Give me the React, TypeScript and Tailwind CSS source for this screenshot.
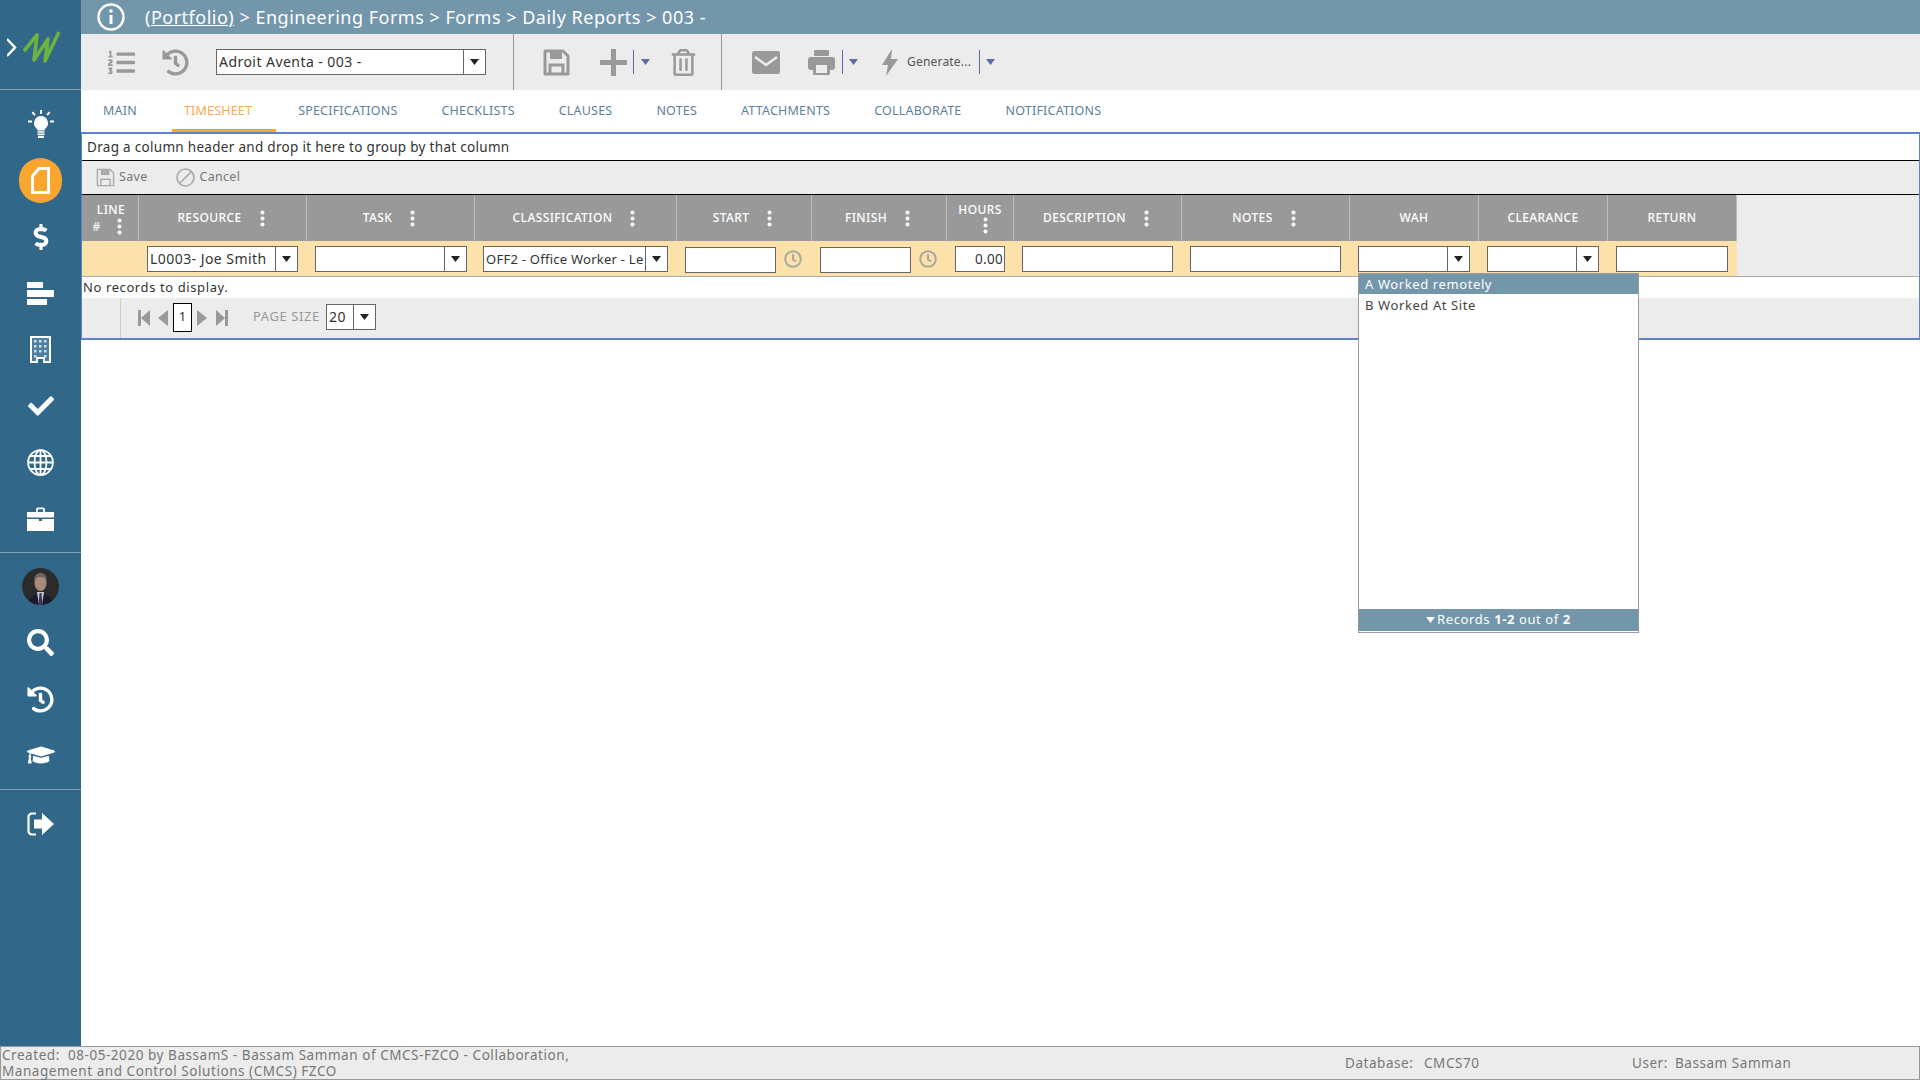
import React from 'react';
import { FaDollarSign, FaCheck, FaSearch, FaHistory, FaGraduationCap, FaListOl, FaRegTrashAlt } from 'react-icons/fa';

const tabs = ['SPECIFICATIONS', 'CHECKLISTS', 'CLAUSES', 'NOTES', 'ATTACHMENTS', 'COLLABORATE', 'NOTIFICATIONS'];

const Caret = ({ color = '#222' }: { color?: string }) => (
  <svg width="9" height="6" viewBox="0 0 9 6"><path d="M0 0h9L4.5 6z" fill={color} /></svg>
);

const Kebab = () => (
  <svg width="5" height="17" viewBox="0 0 5 17" fill="#fff"><circle cx="2.5" cy="2.5" r="2" /><circle cx="2.5" cy="8.5" r="2" /><circle cx="2.5" cy="14.5" r="2" /></svg>
);

const Clock = () => (
  <svg width="18" height="18" viewBox="0 0 18 18" fill="none" stroke="#a9a9a0" strokeWidth="2">
    <circle cx="9" cy="9" r="7.8" />
    <path d="M9 4v5.5l3 2" />
  </svg>
);

const Floppy = ({ size, color, weight }: { size: number; color: string; weight: number }) => (
  <svg width={size} height={size} viewBox="0 0 27 27" fill="none" stroke={color} strokeWidth={weight}>
    <path d="M2 2h18l5 5v18H2z" strokeLinejoin="round" />
    <path d="M7 2h12v8H7z" fill={color} stroke="none" />
    <path d="M7 25v-9h13v9" />
  </svg>
);

const Combo = ({ text = '', w, arrow = 22, font = 'text-[14px] tracking-[0.45px]' }: { text?: string; w: string; arrow?: number; font?: string }) => (
  <div className={`${w} ${font} h-[26px] flex bg-white border border-[#666] text-[#333] overflow-hidden`}>
    <div className="flex-1 min-w-0 pl-[2px] leading-[24px] whitespace-nowrap overflow-hidden">{text}</div>
    <div className="flex items-center justify-center border-l border-[#666] bg-white shrink-0" style={{ width: arrow }}><Caret /></div>
  </div>
);

const Input = ({ w, text = '' }: { w: string; text?: string }) => (
  <div className={`${w} h-[26px] bg-white border border-[#666] text-[13.5px] tracking-[0.3px] text-[#333] text-right pr-[1px] leading-[24px]`}>{text}</div>
);

const Head = ({ label, kebab = true }: { label: string; kebab?: boolean }) => (
  <div className={`flex items-center justify-center gap-[18px] border-r border-[#bdbdbd] text-[12px] tracking-[0.4px] font-medium text-white ${kebab ? 'pr-[3px]' : ''}`}>
    <span>{label}</span>
    {kebab && <Kebab />}
  </div>
);

const Cell = ({ children }: { children?: React.ReactNode }) => (
  <div className="flex items-center gap-[8px] px-[8px]">{children}</div>
);

const Sep = () => <div className="w-px h-[24px] bg-[#5a6ea5]" />;

export default function App() {
  return (
    <div className="h-screen w-screen overflow-hidden flex flex-col bg-white font-['Noto_Sans',sans-serif]">
      <div className="flex-1 min-h-0 flex">
        {/* left nav */}
        <aside className="w-[81px] shrink-0 bg-[#31688a] flex flex-col text-white">
          <div className="h-[90px] shrink-0 border-b border-[#7f9fb5] pl-[7px] pt-[31px]">
            <svg width="54" height="34" viewBox="0 0 54 34" fill="none">
              <path d="M0 8l8 8.5-8 8.5" stroke="#fff" strokeWidth="2.4" />
              <path d="M17 20 L30 4 L27 29 L41 8 L38 30 L52 1" stroke="#6db33f" strokeWidth="3.6" strokeLinejoin="round" />
            </svg>
          </div>
          <nav className="h-[463px] shrink-0 border-b border-[#7f9fb5] pt-[6px] flex flex-col items-center">
            <div className="h-[56px] flex items-center justify-center">
              <svg width="26" height="28" viewBox="0 0 26 28" fill="#fff">
                <path d="M13 6a7 7 0 0 0-4.4 12.4c.6.6.9 1.2.9 2h7c0-.8.3-1.400.9-2A7 7 0 0 0 13 6z" />
                <path d="M9.500 21.300h7v1.500h-7zM9.500 23.500h7V25h-7zM10 25.700h6V28h-6z" />
                <path d="M12 0h2v4h-2zM3.600 2.800l1.500-1.300 2.600 3-1.500 1.300zM22.400 2.800l-1.500-1.300-2.600 3 1.500 1.300zM0 10.500h4v2H0zM22 10.500h4v2h-4z" />
              </svg>
            </div>
            <div className="h-[57px] flex items-center justify-center">
              <div className="w-[43px] h-[45px] rounded-full bg-[#fba72f] flex items-center justify-center">
                <svg width="19" height="27" viewBox="0 0 19 27" fill="none" stroke="#fff" strokeWidth="3"><path d="M8 1.500h9.500v24H1.500V9z" /></svg>
              </div>
            </div>
            <div className="h-[56px] flex items-center justify-center"><FaDollarSign size={26} /></div>
            <div className="h-[56px] flex flex-col justify-center gap-[2px] w-[27px]">
              <div className="w-[16px] h-[6px] bg-white" />
              <div className="w-[27px] h-[7px] bg-white" />
              <div className="w-[20px] h-[6px] bg-white" />
            </div>
            <div className="h-[56px] flex items-center justify-center">
              <svg width="21" height="27" viewBox="0 0 21 27">
                <path d="M0 0h21v27H13v-4H8v4H0z" fill="#fff" />
                <path d="M2 2h17v23h-4v-4H6v4H2z" fill="#4d7f9e" />
                <path d="M4 4h2.500v2.500H4zM9 4h2.500v2.500H9zM14 4h2.500v2.500H14zM4 9h2.500v2.500H4zM9 9h2.500v2.500H9zM14 9h2.500v2.500H14zM4 14h2.500v2.500H4zM9 14h2.500v2.500H9zM14 14h2.500v2.500H14zM4 19h2.500v2.500H4zM14 19h2.500v2.500H14z" fill="#cfe0ea" />
              </svg>
            </div>
            <div className="h-[57px] flex items-center justify-center"><FaCheck size={26} /></div>
            <div className="h-[57px] flex items-center justify-center">
              <svg width="27" height="27" viewBox="0 0 27 27" fill="none" stroke="#fff" strokeWidth="1.800">
                <circle cx="13.500" cy="13.500" r="12.400" />
                <ellipse cx="13.500" cy="13.500" rx="6" ry="12.400" />
                <path d="M13.500 1v25M1 13.500h25M3 7h21M3 20h21" />
              </svg>
            </div>
            <div className="h-[56px] flex items-center justify-center">
              <svg width="27" height="24" viewBox="0 0 27 24" fill="#fff">
                <path d="M9 5V2.500A2 2 0 0 1 11 .5h5a2 2 0 0 1 2 2V5h-1.800V2.300h-5.400V5z" />
                <path d="M0 5h27v5.500H0zM0 12h12v2h3v-2h12v12H0z" />
              </svg>
            </div>
          </nav>
          <nav className="h-[237px] shrink-0 border-b border-[#7f9fb5] pt-[5px] flex flex-col items-center">
            <div className="h-[56px] flex items-center justify-center">
              <svg width="37" height="37" viewBox="0 0 37 37">
                <defs><clipPath id="avatarClip"><circle cx="18.500" cy="18.500" r="18.500" /></clipPath></defs>
                <g clipPath="url(#avatarClip)">
                  <rect width="37" height="37" fill="#2c2a2b" />
                  <path d="M5 37c1-8 6-10 13.500-11C26 27 31 29 32 37z" fill="#171b2c" />
                  <ellipse cx="18.500" cy="15" rx="6" ry="8" fill="#a98a78" />
                  <path d="M12 13c0-6 3-8 6.500-8S25 7 25 13c-1-3-3-4-6.500-4S13 10 12 13z" fill="#6a6560" />
                  <path d="M15 24h7l-2 13h-3z" fill="#c9c9d6" />
                  <path d="M17.500 25h2l1 12h-4z" fill="#3c3560" />
                </g>
              </svg>
            </div>
            <div className="h-[57px] flex items-center justify-center"><FaSearch size={27} /></div>
            <div className="h-[56px] flex items-center justify-center"><FaHistory size={27} /></div>
            <div className="h-[56px] flex items-center justify-center"><FaGraduationCap size={28} /></div>
          </nav>
          <div className="h-[68px] flex items-center justify-center">
            <svg width="27" height="24" viewBox="0 0 27 24" fill="none">
              <path d="M9 1.500H5A3.500 3.500 0 0 0 1.500 5v14A3.500 3.500 0 0 0 5 22.500h4" stroke="#fff" strokeWidth="2.200" />
              <path d="M7 7.500h8V1l12 11-12 11v-6.500H7z" fill="#fff" />
            </svg>
          </div>
        </aside>

        <main className="flex-1 min-w-0 flex flex-col">
          {/* breadcrumb */}
          <div className="h-[34px] shrink-0 bg-[#7396ab] flex items-center pl-[16px] text-white text-[18px] tracking-[0.5px]">
            <svg width="28" height="28" viewBox="0 0 28 28" fill="none" stroke="#fff">
              <circle cx="14" cy="14" r="12.500" strokeWidth="2.400" />
              <path d="M14 12v9" strokeWidth="3" />
              <circle cx="14" cy="8" r="1.800" fill="#fff" stroke="none" />
            </svg>
            <div className="ml-[20px] whitespace-nowrap"><span className="underline">(Portfolio)</span> &gt; Engineering Forms &gt; Forms &gt; Daily Reports &gt; 003 -</div>
          </div>

          {/* toolbar */}
          <div className="h-[56px] shrink-0 bg-[#ececec] flex items-center text-[#999]">
            <div className="w-[433px] h-full shrink-0 border-r border-[#999] flex items-center pl-[27px]">
              <FaListOl size={27} />
              <FaHistory size={27} className="ml-[27px]" />
              <div className="ml-[27px]"><Combo w="w-[270px]" text="Adroit Aventa - 003 -" /></div>
            </div>
            <div className="w-[208px] h-full shrink-0 border-r border-[#999] flex items-center pl-[29px]">
              <Floppy size={27} color="#999" weight={3} />
              <svg width="27" height="27" viewBox="0 0 27 27" fill="#999" className="ml-[30px]"><path d="M11 0h5v11h11v5H16v11h-5V16H0v-5h11z" /></svg>
              <div className="ml-[6px]"><Sep /></div>
              <div className="ml-[7px]"><Caret color="#5a6ea5" /></div>
              <FaRegTrashAlt size={27} className="ml-[20px]" />
            </div>
            <svg width="28" height="23" viewBox="0 0 28 23" className="ml-[30px]"><rect width="28" height="23" rx="2.500" fill="#999" /><path d="M3 6l11 8 11-8" fill="none" stroke="#ececec" strokeWidth="2.500" /></svg>
            <svg width="27" height="25" viewBox="0 0 27 25" className="ml-[28px]">
              <rect x="6" y="0" width="15" height="6" rx="1" fill="#999" />
              <rect x="0" y="7" width="27" height="13" rx="3" fill="#999" />
              <rect x="5" y="13" width="17" height="12" rx="1" fill="#999" />
              <rect x="8" y="15" width="11" height="8" fill="#ececec" />
            </svg>
            <div className="ml-[7px]"><Sep /></div>
            <div className="ml-[6px]"><Caret color="#5a6ea5" /></div>
            <svg width="16" height="27" viewBox="0 0 16 27" fill="#999" className="ml-[24px]"><path d="M10 0L0 16h6L4 27l12-17H9z" /></svg>
            <span className="ml-[9px] text-[12px] tracking-[0.2px] text-[#555] whitespace-nowrap">Generate...</span>
            <div className="ml-[8px]"><Sep /></div>
            <div className="ml-[6px]"><Caret color="#5a6ea5" /></div>
          </div>

          {/* tabs */}
          <div className="h-[42px] shrink-0 flex text-[12.5px] tracking-[0.2px] text-[#5c7f9c]">
            <div className="h-full pl-[22px] pr-[19px] flex items-center">MAIN</div>
            <div className="ml-[16px] h-full pl-[12px] pr-[24px] pt-[3px] flex items-center text-[#fba94f] border-b-[3px] border-[#fba72f]">TIMESHEET</div>
            {tabs.map((tab, i) => (
              <div key={i} className="h-full flex items-center px-[22px]">{tab}</div>
            ))}
          </div>

          {/* grid */}
          <div className="relative shrink-0 border-t-2 border-b-2 border-x border-[#5b85c8]">
            <div className="h-[27px] bg-white border-b border-black pl-[5px] text-[13.5px] tracking-[0.3px] leading-[26px] text-[#333]">Drag a column header and drop it here to group by that column</div>
            <div className="h-[34px] bg-[#ececec] border-b border-black flex items-center pl-[14px] text-[12.5px] tracking-[0.3px] text-[#777]">
              <Floppy size={19} color="#aaa" weight={2} />
              <span className="ml-[4px]">Save</span>
              <svg width="19" height="19" viewBox="0 0 19 19" fill="none" stroke="#aaa" strokeWidth="1.700" className="ml-[29px]"><circle cx="9.500" cy="9.500" r="8.500" /><path d="M3.500 15.500l12-12" /></svg>
              <span className="ml-[4px]">Cancel</span>
            </div>
            <div className="bg-[#ececec]">
              <div className="grid w-[1655px] h-[46px] bg-[#999] grid-cols-[57px_168px_168px_202px_135px_135px_67px_168px_168px_129px_129px_129px]">
                <div className="flex flex-col items-center justify-center border-r border-[#bdbdbd] text-[12px] tracking-[0.4px] font-medium text-white leading-[17px]">
                  <span className="ml-[2px]">LINE</span>
                  <div className="flex items-center gap-[16px] mr-[6px]"><span>#</span><Kebab /></div>
                </div>
                <Head label="RESOURCE" />
                <Head label="TASK" />
                <Head label="CLASSIFICATION" />
                <Head label="START" />
                <Head label="FINISH" />
                <div className="flex flex-col items-center justify-center border-r border-[#bdbdbd] text-[12px] tracking-[0.4px] font-medium text-white leading-[15px]">
                  <span>HOURS</span>
                  <div className="ml-[10px]"><Kebab /></div>
                </div>
                <Head label="DESCRIPTION" />
                <Head label="NOTES" />
                <Head label="WAH" kebab={false} />
                <Head label="CLEARANCE" kebab={false} />
                <Head label="RETURN" kebab={false} />
              </div>
              <div className="grid w-[1655px] h-[35px] bg-[#fde1ab] grid-cols-[57px_168px_168px_202px_135px_135px_67px_168px_168px_129px_129px_129px]">
                <Cell />
                <Cell><Combo w="w-[151px]" text="L0003- Joe Smith" /></Cell>
                <Cell><Combo w="w-[152px]" /></Cell>
                <Cell><Combo w="w-[185px]" text="OFF2 - Office Worker - Le" font="text-[13px] tracking-[0.25px]" /></Cell>
                <Cell><Input w="w-[91px] mt-[2px]" /><Clock /></Cell>
                <Cell><Input w="w-[91px] mt-[2px]" /><Clock /></Cell>
                <Cell><Input w="w-[50px]" text="0.00" /></Cell>
                <Cell><Input w="w-[151px]" /></Cell>
                <Cell><Input w="w-[151px]" /></Cell>
                <Cell><Combo w="w-[112px]" /></Cell>
                <Cell><Combo w="w-[112px]" /></Cell>
                <Cell><Input w="w-[112px]" /></Cell>
              </div>
            </div>
            <div className="h-[21px] bg-white border-y border-[#aaa] box-content -mb-px pl-[1px] text-[13px] tracking-[0.6px] leading-[20px] text-[#333]">No records to display.</div>
            <div className="h-[40px] bg-[#ececec] flex items-center">
              <div className="w-[39px] h-full border-r border-[#ccc]" />
              <svg width="12" height="16" viewBox="0 0 12 16" fill="#999" className="ml-[17px] mb-[1px]"><path d="M0 0h3v16H0zM12 0v16L3 8z" /></svg>
              <svg width="10" height="16" viewBox="0 0 10 16" fill="#999" className="ml-[8px] mb-[1px]"><path d="M10 0v16L0 8z" /></svg>
              <div className="ml-[5px] mb-[2px] w-[19px] h-[29px] bg-white border border-black flex items-center justify-center text-[13px] text-[#333]">1</div>
              <svg width="10" height="16" viewBox="0 0 10 16" fill="#999" className="ml-[5px] mb-[1px]"><path d="M0 0v16l10-8z" /></svg>
              <svg width="12" height="16" viewBox="0 0 12 16" fill="#999" className="ml-[9px] mb-[1px]"><path d="M9 0h3v16H9zM0 0v16l9-8z" /></svg>
              <span className="ml-[25px] mb-[3px] text-[13px] tracking-[0.6px] text-[#999] whitespace-nowrap">PAGE SIZE</span>
              <div className="ml-[6px] mb-[3px]"><Combo w="w-[50px]" text="20" arrow={22} /></div>
            </div>

            {/* WAH dropdown */}
            <div className="absolute left-[1276px] top-[139px] w-[281px] h-[360px] bg-white border border-[#999] flex flex-col text-[13px] tracking-[0.6px]">
              <div className="h-[20px] bg-[#7396ab] text-white pl-[6px] leading-[20px]">A Worked remotely</div>
              <div className="h-[22px] pl-[6px] leading-[22px] text-[#444]">B Worked At Site</div>
              <div className="flex-1" />
              <div className="h-[22px] mb-px bg-[#7396ab] text-white flex items-center justify-center gap-[2px]">
                <Caret color="#fff" />
                <span>Records <b>1-2</b> out of <b>2</b></span>
              </div>
            </div>
          </div>
        </main>
      </div>

      {/* status bar */}
      <footer className="h-[34px] shrink-0 bg-[#ececec] border border-[#999] flex text-[13.5px] tracking-[0.55px] text-[#777] leading-[16px]">
        <div className="w-[590px] pl-[1px]">Created:&nbsp; 08-05-2020 by BassamS - Bassam Samman of CMCS-FZCO - Collaboration, Management and Control Solutions (CMCS) FZCO</div>
        <div className="ml-[754px] w-[287px] flex items-center whitespace-nowrap"><span className="w-[79px]">Database:</span><span>CMCS70</span></div>
        <div className="flex items-center whitespace-nowrap"><span className="w-[43px]">User:</span><span>Bassam Samman</span></div>
      </footer>
    </div>
  );
}
